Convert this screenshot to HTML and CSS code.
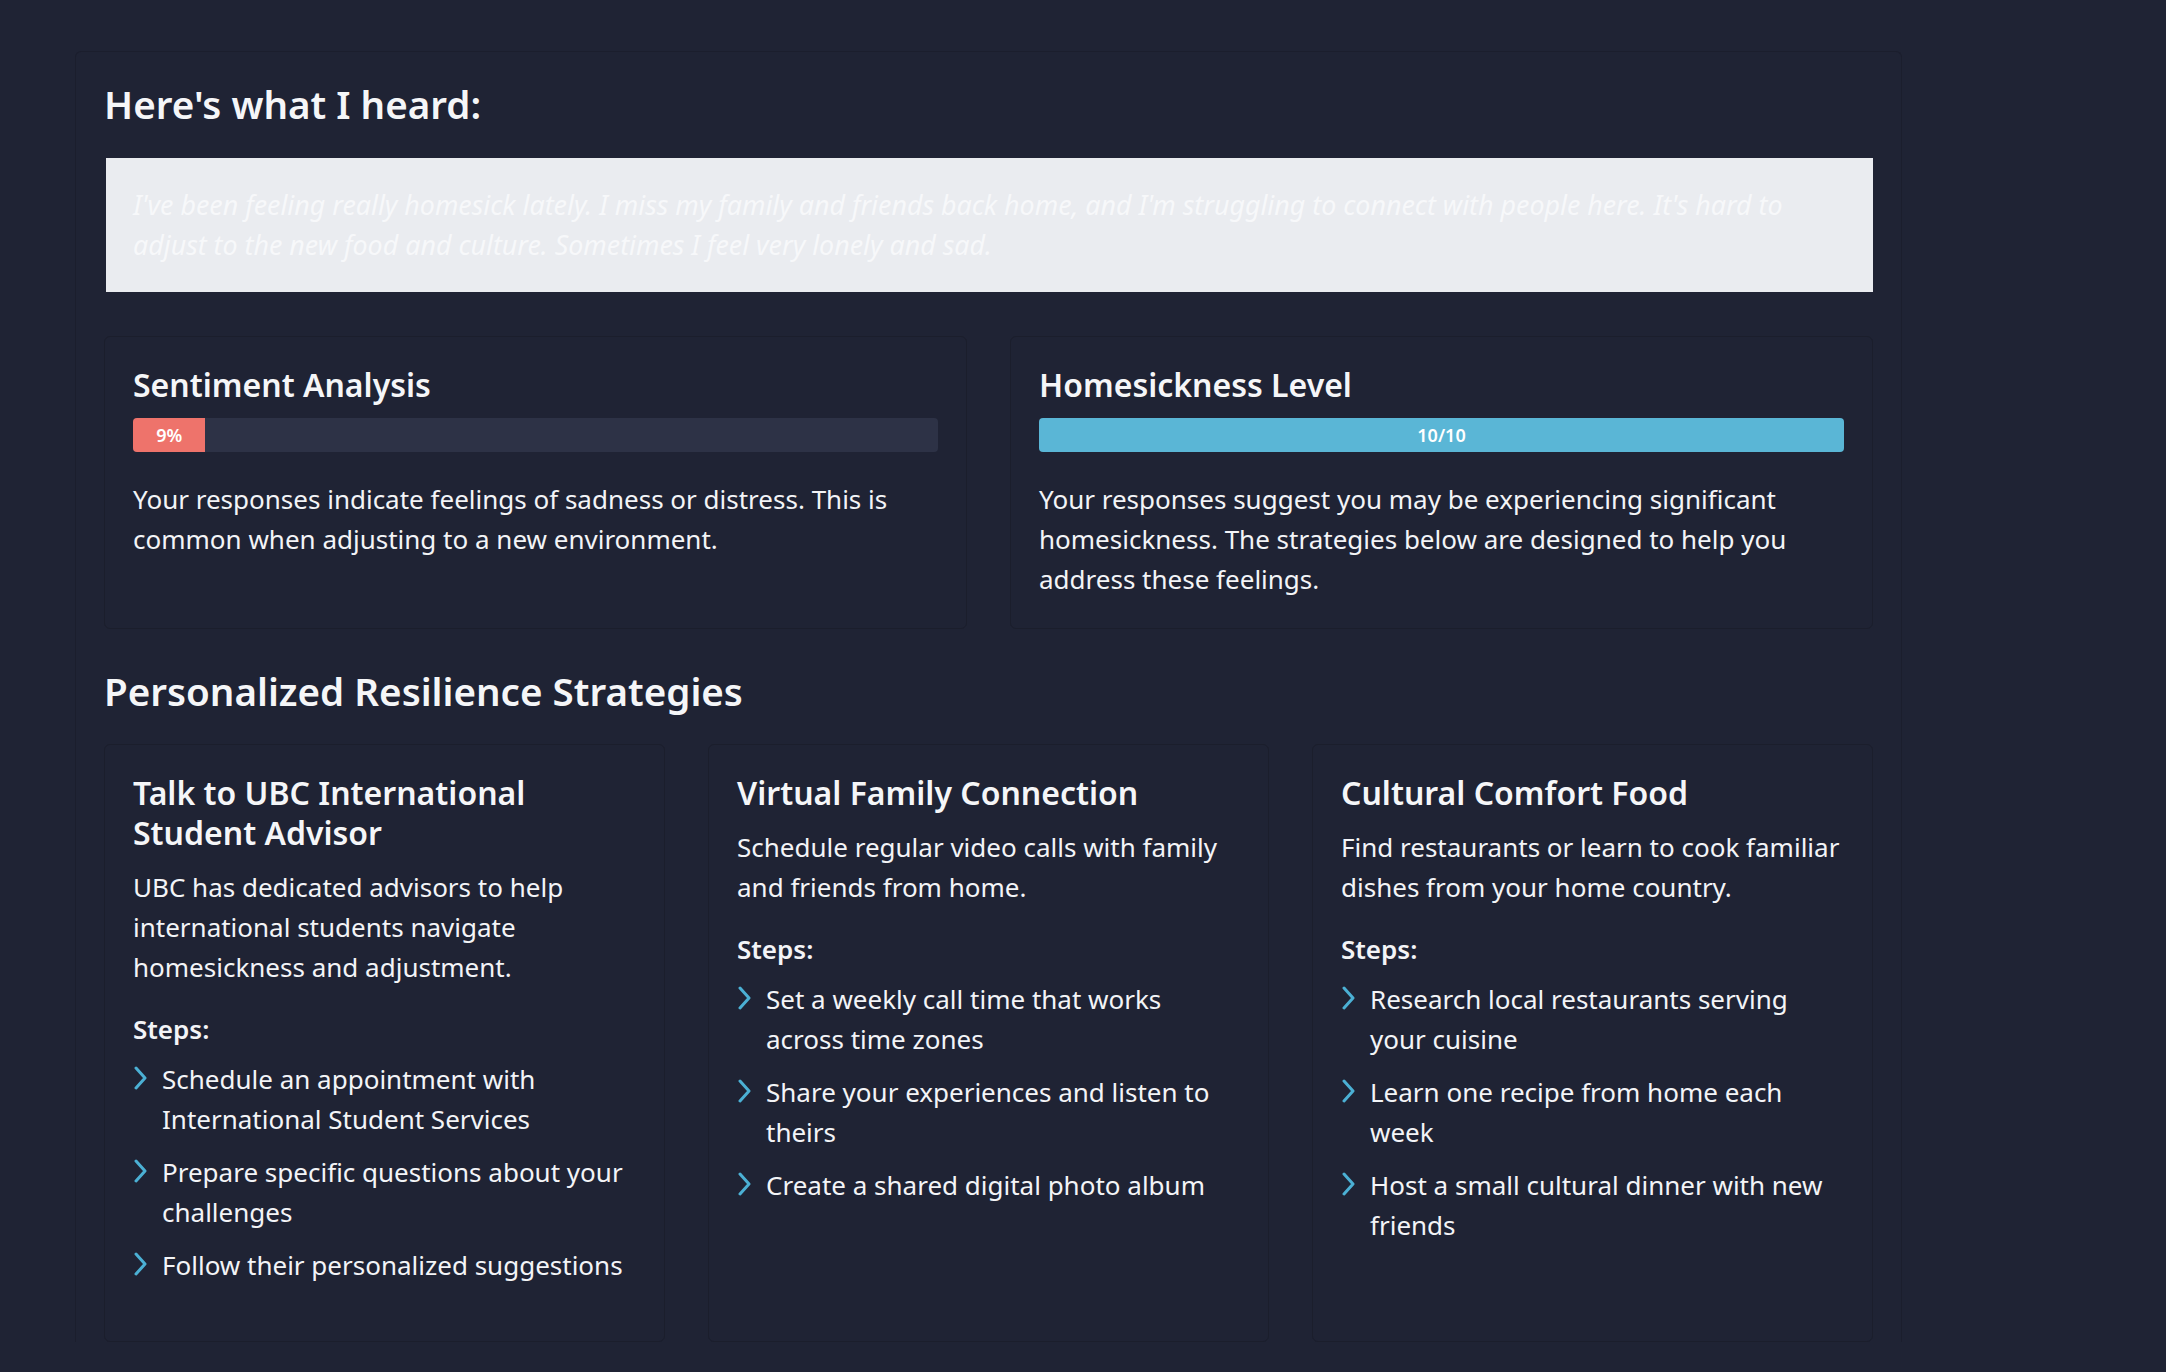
FILE: index.html
```html
<!DOCTYPE html>
<html lang="en">
<head>
<meta charset="utf-8">
<title>Here's what I heard</title>
<link rel="stylesheet" href="styles.css">
</head>
<body>
<main class="panel">
  <h2 class="section-title">Here's what I heard:</h2>
  <blockquote class="transcript">I've been feeling really homesick lately. I miss my family and friends back home, and I'm struggling to connect with people here. It's hard to adjust to the new food and culture. Sometimes I feel very lonely and sad.</blockquote>

  <div class="analysis-grid">
    <section class="card">
      <h3 class="card-title">Sentiment Analysis</h3>
      <div class="meter">
        <div class="meter-fill meter-red" style="width: 9%">9%</div>
      </div>
      <p class="card-text">Your responses indicate feelings of sadness or distress. This is common when adjusting to a new environment.</p>
    </section>
    <section class="card">
      <h3 class="card-title">Homesickness Level</h3>
      <div class="meter">
        <div class="meter-fill meter-blue" style="width: 100%">10/10</div>
      </div>
      <p class="card-text">Your responses suggest you may be experiencing significant homesickness. The strategies below are designed to help you address these feelings.</p>
    </section>
  </div>

  <h2 class="section-title strategies-title">Personalized Resilience Strategies</h2>

  <div class="strategy-grid">
    <section class="card strategy">
      <h3 class="card-title">Talk to UBC International Student Advisor</h3>
      <p class="card-text desc">UBC has dedicated advisors to help international students navigate homesickness and adjustment.</p>
      <h4 class="steps-label">Steps:</h4>
      <ul class="steps">
        <li><svg class="chev" viewBox="0 0 13 24"><polyline points="2,2 11,12 2,22"/></svg><span>Schedule an appointment with International Student Services</span></li>
        <li><svg class="chev" viewBox="0 0 13 24"><polyline points="2,2 11,12 2,22"/></svg><span>Prepare specific questions about your challenges</span></li>
        <li><svg class="chev" viewBox="0 0 13 24"><polyline points="2,2 11,12 2,22"/></svg><span>Follow their personalized suggestions</span></li>
      </ul>
    </section>
    <section class="card strategy">
      <h3 class="card-title">Virtual Family Connection</h3>
      <p class="card-text desc">Schedule regular video calls with family and friends from home.</p>
      <h4 class="steps-label">Steps:</h4>
      <ul class="steps">
        <li><svg class="chev" viewBox="0 0 13 24"><polyline points="2,2 11,12 2,22"/></svg><span>Set a weekly call time that works across time zones</span></li>
        <li><svg class="chev" viewBox="0 0 13 24"><polyline points="2,2 11,12 2,22"/></svg><span>Share your experiences and listen to theirs</span></li>
        <li><svg class="chev" viewBox="0 0 13 24"><polyline points="2,2 11,12 2,22"/></svg><span>Create a shared digital photo album</span></li>
      </ul>
    </section>
    <section class="card strategy">
      <h3 class="card-title">Cultural Comfort Food</h3>
      <p class="card-text desc">Find restaurants or learn to cook familiar dishes from your home country.</p>
      <h4 class="steps-label">Steps:</h4>
      <ul class="steps">
        <li><svg class="chev" viewBox="0 0 13 24"><polyline points="2,2 11,12 2,22"/></svg><span>Research local restaurants serving your cuisine</span></li>
        <li><svg class="chev" viewBox="0 0 13 24"><polyline points="2,2 11,12 2,22"/></svg><span>Learn one recipe from home each week</span></li>
        <li><svg class="chev" viewBox="0 0 13 24"><polyline points="2,2 11,12 2,22"/></svg><span>Host a small cultural dinner with new friends</span></li>
      </ul>
    </section>
  </div>
</main>
</body>
</html>
```

FILE: styles.css
```css
* { box-sizing: border-box; }

html, body {
  margin: 0;
  background: #1f2334;
}

body {
  padding: 51px 0 0 75px;
  font-family: "Noto Sans", "Open Sans", "Liberation Sans", sans-serif;
  color: #f3f4f7;
  font-size: 26px;
  line-height: 40px;
}

.panel {
  width: 1827px;
  padding: 28px 28px 0;
  border: 1px solid #1b1e2d;
  border-bottom: none;
  border-radius: 6px 6px 0 0;
  background: #1f2334;
}

.section-title {
  margin: 0;
  font-size: 38.6px;
  line-height: 48px;
  font-weight: 600;
  color: #f5f6f8;
}

.transcript {
  margin: 30px 0 44px 2px;
  padding: 27px 27px;
  background: #eaecf0;
  color: #f7f8fa;
  font-style: italic;
  font-size: 26.8px;
  line-height: 40px;
}

.analysis-grid {
  display: grid;
  grid-template-columns: 1fr 1fr;
  gap: 43px;
}

.card {
  background: #1f2334;
  border: 1px solid #1b1e2c;
  border-radius: 6px;
  padding: 28px 28px 29px;
}

.card-title {
  margin: 0;
  font-size: 32px;
  line-height: 40px;
  font-weight: 600;
  color: #f5f6f8;
}

.meter {
  margin-top: 13px;
  height: 34px;
  background: #2d3246;
  border-radius: 4px;
  overflow: hidden;
  display: flex;
}

.meter-fill {
  height: 100%;
  display: flex;
  align-items: center;
  justify-content: center;
  font-size: 18px;
  font-weight: 600;
  color: #ffffff;
  line-height: 1;
}

.meter-red { background: #ee736b; }
.meter-blue { background: #5ab6d6; }

.card-text {
  margin: 27px 0 0;
  font-size: 26px;
  line-height: 40px;
}

.strategies-title {
  margin-top: 38px;
}

.strategy-grid {
  margin-top: 29px;
  display: grid;
  grid-template-columns: repeat(3, 1fr);
  gap: 43px;
}

.strategy {
  padding-bottom: 56px;
}

.strategy .desc {
  margin-top: 14px;
}

.steps-label {
  margin: 22px 0 0;
  font-size: 26px;
  line-height: 40px;
  font-weight: 600;
}

.steps {
  list-style: none;
  margin: 10px 0 0;
  padding: 0;
  display: flex;
  flex-direction: column;
  gap: 13px;
}

.steps li {
  display: flex;
  align-items: flex-start;
}

.chev {
  flex: none;
  width: 13px;
  height: 24px;
  margin: 7px 15px 0 1px;
  fill: none;
  stroke: #4bb0d4;
  stroke-width: 3;
  stroke-linecap: round;
  stroke-linejoin: round;
}
```
